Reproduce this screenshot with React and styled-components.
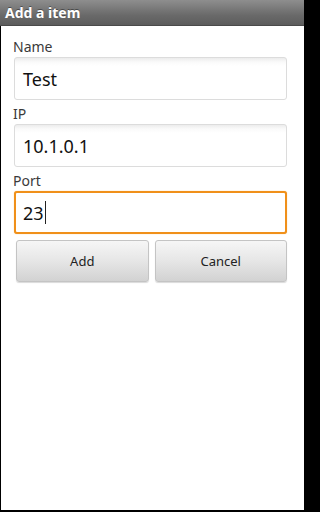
import React from "react";
import styled, { createGlobalStyle } from "styled-components";

const Global = createGlobalStyle`
  html, body { margin: 0; padding: 0; background: #000; }
  * { box-sizing: border-box; }
`;

const Frame = styled.div`
  width: 307px;
  height: 512px;
  background: #000;
  padding: 0 3px 2px 0;
  display: flex;
  flex-direction: column;
  font-family: "Noto Sans", "Open Sans", sans-serif;
`;

const TitleBar = styled.div`
  height: 26px;
  flex: none;
  background: linear-gradient(#8e8e8e, #6a6a6a 60%, #5c5c5c);
  border-bottom: 1px solid #4a4a4a;
  color: #fff;
  font-weight: bold;
  font-size: 14px;
  line-height: 25px;
  padding-left: 5px;
  text-shadow: 0 -1px 0 rgba(0,0,0,0.4);
`;

const Body = styled.div`
  flex: 1;
  margin-left: 1px;
  background: #fff;
  padding: 11px 17px 0 12px;
  display: flex;
  flex-direction: column;
`;

const Label = styled.div`
  font-size: 14px;
  line-height: 20px;
  color: #3a3a3a;
  height: 20px;
`;

const Field = styled.div`
  height: 43px;
  margin: 0 0 4px 1px;
  border-radius: 3px;
  border: ${p => (p.$focused ? "2px solid #f0901a" : "1px solid #dcdcdc")};
  background: ${p =>
    p.$focused
      ? "#fff"
      : "linear-gradient(#ececec 0px, #fafafa 4px, #fff 8px)"};
  box-shadow: ${p => (p.$focused ? "0 0 1px #f7b55a" : "none")};
  display: flex;
  align-items: center;
  padding-left: ${p => (p.$focused ? "7px" : "8px")};
  font-size: 18px;
  color: #111;
`;

const Caret = styled.span`
  display: inline-block;
  width: 1px;
  height: 23px;
  background: #222;
  margin-left: 1px;
`;

const Buttons = styled.div`
  display: flex;
  gap: 6px;
  margin: 2px 0 0 3px;
`;

const Button = styled.div`
  flex: 1;
  height: 42px;
  border-radius: 3px;
  border: 1px solid #c4c4c4;
  background: linear-gradient(#f6f6f6, #e6e6e6 50%, #d2d2d2);
  box-shadow: 0 1px 1px rgba(0,0,0,0.15);
  display: flex;
  align-items: center;
  justify-content: center;
  font-size: 13px;
  color: #222;
`;

export default function App() {
  return (
    <>
      <Global />
      <Frame>
        <TitleBar>Add a item</TitleBar>
        <Body>
          <Label>Name</Label>
          <Field>Test</Field>
          <Label>IP</Label>
          <Field>10.1.0.1</Field>
          <Label>Port</Label>
          <Field $focused>
            23<Caret />
          </Field>
          <Buttons>
            <Button>Add</Button>
            <Button>Cancel</Button>
          </Buttons>
        </Body>
      </Frame>
    </>
  );
}
